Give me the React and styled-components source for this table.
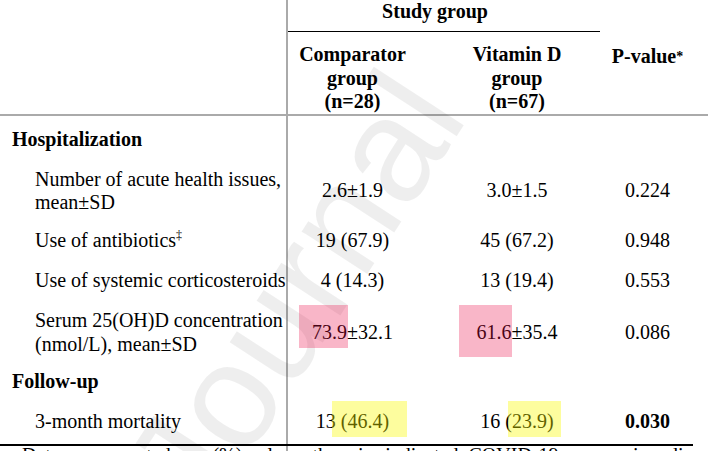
import React from "react";
import styled, { createGlobalStyle } from "styled-components";

const GlobalStyle = createGlobalStyle`
  html, body {
    margin: 0;
    padding: 0;
    background: #fff;
    overflow: hidden;
  }
`;

// column tracks shared by the header and every body row
const COLS = "288px 129px 200px 61px 1fr";

const Page = styled.div`
  position: relative;
  width: 708px;
  height: 451px;
  overflow: hidden;
  background: linear-gradient(#aaa, #aaa) 286px 0 / 2px 100% no-repeat, #fff;
  color: #000;
  font-family: "Liberation Serif", "Times New Roman", serif;
  font-size: 20px;
  line-height: 23.5px;
`;

const Watermark = styled.div`
  position: absolute;
  left: 100px;
  top: 456px;
  font-family: "Liberation Sans", Arial, sans-serif;
  font-size: 148px;
  line-height: 1;
  color: rgba(0, 0, 0, 0.065);
  white-space: nowrap;
  transform: rotate(-57deg);
  transform-origin: 0 0;
  pointer-events: none;
`;

const Head = styled.div`
  display: grid;
  grid-template-columns: ${COLS};
  grid-template-rows: 32px 82px;
  border-bottom: 2px solid #aaa;
  font-weight: bold;
`;

const Spanner = styled.div`
  grid-column: 2 / 4;
  grid-row: 1;
  margin-right: 17px;
  padding-right: 18px;
  border-bottom: 1px solid #000;
  text-align: center;
`;

const GroupHead = styled.div`
  grid-row: 2;
  grid-column: ${(p) => p.$col};
  padding-top: 11px;
  text-align: center;
`;

const PHead = styled.div`
  grid-column: 4;
  grid-row: 1 / 3;
  display: flex;
  align-items: center;
  justify-content: center;
  white-space: nowrap;
`;

const Sup = styled.sup`
  font-size: ${(p) => p.$size || 12}px;
  line-height: 0;
  vertical-align: 8px;
`;

const Body = styled.div`
  width: 693px;
  padding-top: 4px;
  border-bottom: 2px solid #000;
`;

const Row = styled.div`
  display: grid;
  grid-template-columns: ${COLS};
  align-items: center;
  height: ${(p) => p.$h}px;
`;

const Label = styled.div`
  padding-left: ${(p) => (p.$section ? 12 : 35)}px;
  font-weight: ${(p) => (p.$section ? "bold" : "normal")};
  white-space: nowrap;
`;

const Value = styled.div`
  display: flex;
  justify-content: center;
  white-space: pre;
  font-weight: ${(p) => (p.$bold ? "bold" : "normal")};
`;

const Mark = styled.span`
  position: relative;

  &::after {
    content: "";
    position: absolute;
    top: ${(p) => -p.$up}px;
    bottom: ${(p) => -p.$down}px;
    left: ${(p) => -p.$left}px;
    right: ${(p) => -p.$right}px;
    background: ${(p) =>
      p.$tone === "pink" ? "rgba(235, 12, 72, 0.3)" : "rgba(250, 250, 0, 0.38)"};
  }
`;

const Footnote = styled.div`
  padding-left: 22px;
  line-height: 18px;
  white-space: nowrap;
`;

const rows = [
  { h: 40, section: true, label: "Hospitalization" },
  {
    h: 62,
    label: (
      <>
        Number of acute health issues,
        <br />
        mean±SD
      </>
    ),
    a: "2.6±1.9",
    b: "3.0±1.5",
    p: "0.224",
  },
  {
    h: 37,
    label: (
      <>
        Use of antibiotics<Sup>‡</Sup>
      </>
    ),
    a: "19 (67.9)",
    b: "45 (67.2)",
    p: "0.948",
  },
  { h: 43, label: "Use of systemic corticosteroids", a: "4 (14.3)", b: "13 (19.4)", p: "0.553" },
  {
    h: 61,
    label: (
      <>
        Serum 25(OH)D concentration
        <br />
        (nmol/L), mean±SD
      </>
    ),
    a: (
      <>
        <Mark $tone="pink" $up={16} $down={4} $left={13} $right={1}>
          73.9
        </Mark>
        ±32.1
      </>
    ),
    b: (
      <>
        <Mark $tone="pink" $up={16} $down={13} $left={18} $right={0}>
          61.6
        </Mark>
        ±35.4
      </>
    ),
    p: "0.086",
  },
  { h: 37, section: true, label: "Follow-up" },
  {
    h: 44,
    label: "3-month mortality",
    a: (
      <>
        {"13 "}
        <Mark $tone="yellow" $up={9} $down={3} $left={9} $right={18}>
          (46.4)
        </Mark>
      </>
    ),
    b: (
      <>
        {"16 "}
        <Mark $tone="yellow" $up={9} $down={3} $left={-3} $right={7}>
          (23.9)
        </Mark>
      </>
    ),
    p: "0.030",
    bold: true,
  },
];

export default function App() {
  return (
    <>
      <GlobalStyle />
      <Page>
        <Watermark>Journal</Watermark>
        <Head>
          <Spanner>Study group</Spanner>
          <GroupHead $col={2}>
            Comparator
            <br />
            group
            <br />
            (n=28)
          </GroupHead>
          <GroupHead $col={3}>
            Vitamin D
            <br />
            group
            <br />
            (n=67)
          </GroupHead>
          <PHead>
            P-value<Sup $size={14}>*</Sup>
          </PHead>
        </Head>
        <Body>
          {rows.map((r, i) => (
            <Row key={i} $h={r.h}>
              <Label $section={r.section}>{r.label}</Label>
              <Value>{r.a}</Value>
              <Value>{r.b}</Value>
              <Value $bold={r.bold}>{r.p}</Value>
            </Row>
          ))}
        </Body>
        <Footnote>
          Data are presented as n (%) unless otherwise indicated. COVID-19, coronavirus disease 2019.
        </Footnote>
      </Page>
    </>
  );
}
